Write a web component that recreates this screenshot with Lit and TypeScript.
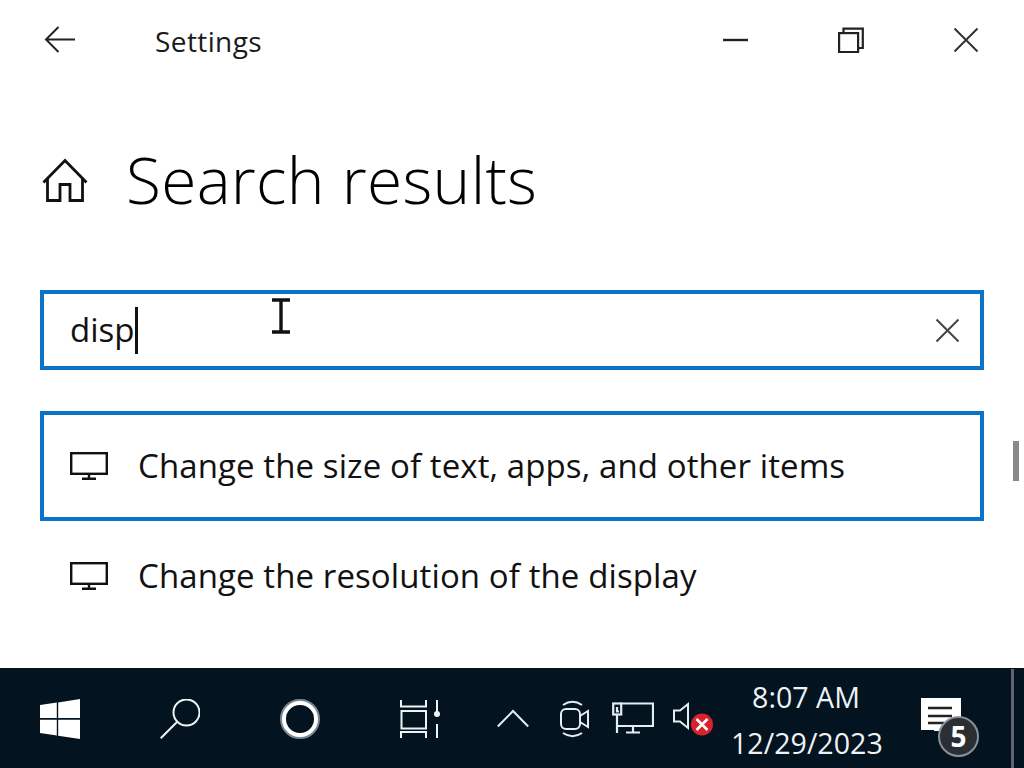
import { LitElement, html, css, svg } from "lit";
import { customElement } from "lit/decorators.js";

const monitor = svg`<svg class="mon" width="38" height="28" viewBox="0 0 38 28" fill="none" stroke="#111" stroke-width="2.4"><rect x="1.2" y="1.2" width="35.6" height="20.6"/><path d="M19 22v5M12 26.8h14"/></svg>`;

@customElement("app-root")
export class AppRoot extends LitElement {
  static styles = css`
    :host { display: flex; flex-direction: column; width: 1024px; height: 768px; overflow: hidden; position: relative; background: #fff; font-family: "Open Sans", "Noto Sans", sans-serif; color: #111; }
    .main { flex: 1; display: flex; flex-direction: column; padding: 0 40px; min-height: 0; }
    .titlebar { height: 80px; display: flex; align-items: center; margin: 0 -40px; padding: 0 0 0 44px; }
    .back { width: 33px; height: 28px; display: block; }
    .apptitle { font-size: 28px; margin-left: 78px; padding-top: 2px; color: #1a1a1a; letter-spacing: 0.4px; flex: 1; }
    .winctl { display: flex; margin-right: 1px; }
    .winctl div { width: 115px; display: flex; justify-content: center; }
    .heading { display: flex; align-items: center; margin-top: 57px; height: 86px; }
    .home { margin-left: 2px; width: 46px; height: 46px; }
    .heading h1 { margin: 0 0 0 38px; font-size: 64px; font-weight: 300; color: #000; letter-spacing: 0.3px; line-height: 86px; white-space: nowrap; }
    .search { margin-top: 67px; height: 80px; box-sizing: border-box; border: 4.5px solid #0b74c8; display: flex; align-items: center; padding: 0 20px 0 26px; }
    .search .text { font-size: 33px; color: #111; line-height: 44px; }
    .caret { width: 3px; height: 47px; background: #111; margin-left: 1px; }
    .spacer { flex: 1; }
    .result { display: flex; align-items: center; height: 110px; box-sizing: border-box; padding: 0 0 0 26px; border: 4.5px solid transparent; font-size: 33px; letter-spacing: 0.1px; white-space: nowrap; color: #111; }
    .result.focus { border-color: #0b74c8; margin-top: 41px; }
    .result .label { margin-left: 30px; padding-bottom: 2px; }
    .result .mon { flex: none; }
    .taskbar { height: 100px; background: #03131f; display: flex; align-items: center; color: #eef2f5; position: relative; border-top: 1px solid #0a0f0f; box-sizing: border-box; flex: none; }
    .slot { width: 120px; display: flex; justify-content: center; flex: none; }
    .tray { display: flex; align-items: center; margin-left: 3px; }
    .tray div { display: flex; justify-content: center; flex: none; width: 60px; }
    .tray .meet { padding-left: 4px; box-sizing: border-box; }
    .tray .net { padding-bottom: 2px; box-sizing: border-box; }
    .clock { width: 150px; margin-left: 8px; font-size: 28.6px; line-height: 46px; text-align: center; white-space: nowrap; margin-top: 3px; }
    .notif { margin-left: 39px; position: relative; width: 62px; height: 58px; }
    .notif svg { display: block; margin-top: 6px; }
    .badge { position: absolute; left: 18px; top: 26px; width: 41px; height: 41px; box-sizing: border-box; border-radius: 50%; border: 2px solid #8a9198; background: #2b2f34; color: #fff; font-weight: 700; font-size: 28px; display: flex; align-items: center; justify-content: center; line-height: 1; }
    .edge { position: absolute; left: 1011px; top: 0; bottom: 0; width: 3px; background: #5e6470; }
    .scrollthumb { position: absolute; left: 1013px; top: 441px; width: 6px; height: 40px; background: #8a8a8a; }
    .ibeam { position: absolute; left: 269px; top: 298px; }
  `;

  render() {
    return html`
      <div class="main">
        <div class="titlebar">
          <svg class="back" viewBox="0 0 33 28" fill="none" stroke="#222" stroke-width="2"><path d="M31 13.5H2M14.5 1L2 13.5 14.5 26"/></svg>
          <div class="apptitle">Settings</div>
          <div class="winctl">
            <div><svg width="26" height="26" viewBox="0 0 26 26"><path d="M0 13h25" stroke="#222" stroke-width="2.4"/></svg></div>
            <div><svg width="26" height="26" viewBox="0 0 26 26" fill="none" stroke="#222" stroke-width="2.2"><rect x="1.1" y="6.1" width="19" height="19"/><path d="M5.5 6V1.6H24.8V21H20"/></svg></div>
            <div><svg width="26" height="26" viewBox="0 0 26 26" fill="none" stroke="#333" stroke-width="2"><path d="M1.5 1.5l23 23M24.5 1.5l-23 23"/></svg></div>
          </div>
        </div>
        <div class="heading">
          <svg class="home" viewBox="0 0 46 46" fill="none" stroke="#111" stroke-width="2.8"><path d="M1.5 25.5L23 3.5l21.5 22"/><path d="M5.5 22v21.5h12.5V27.5h10V43.5h12.5V22"/></svg>
          <h1>Search results</h1>
        </div>
        <div class="search">
          <span class="text">disp</span><span class="caret"></span>
          <span class="spacer"></span>
          <svg width="25" height="25" viewBox="0 0 25 25" fill="none" stroke="#444" stroke-width="2"><path d="M1.5 1.5l22 22M23.5 1.5l-22 22"/></svg>
        </div>
        <div class="result focus">${monitor}<span class="label">Change the size of text, apps, and other items</span></div>
        <div class="result">${monitor}<span class="label">Change the resolution of the display</span></div>
      </div>
      <div class="taskbar">
        <div class="slot"><svg width="40" height="40" viewBox="0 0 40 40" fill="#fff"><path d="M0 6l16.8-2.4V19H0zM18.2 3.4L40 0v19H18.2zM0 20.8h16.800V36.500L0 34zM18.200 20.800H40V40l-21.800-3.200z"/></svg></div>
        <div class="slot"><svg width="40" height="40" viewBox="0 0 40 40" fill="none" stroke="#eef4f6" stroke-width="2"><circle cx="26.5" cy="13.5" r="13"/><path d="M17 23L.7 39.3"/></svg></div>
        <div class="slot"><svg width="42" height="42" viewBox="0 0 42 42" fill="none"><circle cx="21" cy="21" r="17.5" stroke="#7d8991" stroke-width="5"/><circle cx="21" cy="21" r="16" stroke="#fff" stroke-width="4"/></svg></div>
        <div class="slot"><svg width="40" height="40" viewBox="0 0 40 40" fill="none" stroke="#eef4f6" stroke-width="2"><path d="M1 1v6.5h25V1M1.5 12h24.5v17.5H1.500zM1 39v-6h25v6M37 1v12M37 25v14"/><circle cx="37" cy="15" r="3" fill="#eef4f6" stroke="none"/></svg></div>
        <div class="tray">
          <div><svg width="32" height="20" viewBox="0 0 32 20" fill="none" stroke="#e4eef2" stroke-width="2"><path d="M.8 17.5L16 2l15.2 15.5"/></svg></div>
          <div class="meet"><svg width="30" height="38" viewBox="0 0 30 38" fill="none" stroke="#e4eef2" stroke-width="2"><path d="M3 5C9 1 16 1 22 5M3 33c6 4 13 4 19 0"/><rect x="1" y="9" width="19" height="20" rx="5"/><path d="M20 16l8-5v16l-8-5"/></svg></div>
          <div class="net"><svg width="42" height="32" viewBox="0 0 42 32" fill="none" stroke="#e4eef2" stroke-width="2.2"><path d="M8 1.5h33V24H5"/><rect x="1.2" y="1.5" width="8" height="11"/><path d="M5 5v4.5h2M5 12.5V31M21 24v6M14 30.5h14"/></svg></div>
          <div><svg width="40" height="36" viewBox="0 0 40 36" fill="none"><path d="M1 9.5h6L15 3v24L7 20.5H1z" stroke="#e4eef2" stroke-width="2"/><circle cx="29" cy="23.5" r="11" fill="#d9222e"/><path d="M23.5 18l11 11M34.500 18l-11 11" stroke="#fff" stroke-width="2.6"/></svg></div>
        </div>
        <div class="clock">8:07 AM<br />12/29/2023</div>
        <div class="notif">
          <svg width="42" height="38" viewBox="0 0 42 38"><path d="M1 2h40v33H14v-1H1z" fill="#fff"/><path d="M8 12h24M8 20h24M8 27h16" stroke="#222" stroke-width="2.4"/></svg>
          <div class="badge">5</div>
        </div>
        <div class="edge"></div>
      </div>
      <div class="scrollthumb"></div>
      <svg class="ibeam" width="24" height="36" viewBox="0 0 24 36" fill="none" stroke="#111" stroke-width="3.4"><path d="M3 2h18M12 2v32M3 34h18"/></svg>
    `;
  }
}
